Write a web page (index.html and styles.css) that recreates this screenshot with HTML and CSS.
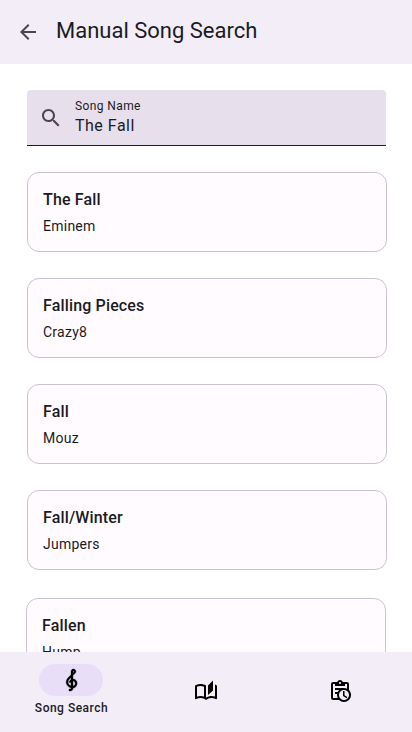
FILE: index.html
```html
<!DOCTYPE html>
<html lang="en">
<head>
<meta charset="utf-8">
<title>Manual Song Search</title>
<link rel="stylesheet" href="styles.css">
</head>
<body>
<div class="screen">
  <header class="app-bar">
    <svg class="icon back" viewBox="0 0 24 24"><path d="M20 11H7.83l5.59-5.59L12 4l-8 8 8 8 1.41-1.41L7.83 13H20v-2z"/></svg>
    <h1>Manual Song Search</h1>
  </header>
  <main>
    <label class="field">
      <svg class="icon" viewBox="0 0 24 24"><path d="M15.5 14h-.79l-.28-.27C15.41 12.59 16 11.11 16 9.5 16 5.91 13.09 3 9.5 3S3 5.91 3 9.5 5.91 16 9.5 16c1.61 0 3.09-.59 4.23-1.57l.27.28v.79l5 4.99L20.49 19l-4.99-5zm-6 0C7.01 14 5 11.99 5 9.5S7.01 5 9.5 5 14 7.01 14 9.5 11.99 14 9.5 14z"/></svg>
      <span class="field-text"><span class="field-label">Song Name</span><span class="field-value">The Fall</span></span>
    </label>
    <article class="card"><h2>The Fall</h2><p>Eminem</p></article>
    <article class="card"><h2>Falling Pieces</h2><p>Crazy8</p></article>
    <article class="card"><h2>Fall</h2><p>Mouz</p></article>
    <article class="card"><h2>Fall/Winter</h2><p>Jumpers</p></article>
    <article class="card card-last"><h2>Fallen</h2><p>Hump</p></article>
  </main>
  <nav class="nav-bar">
    <a class="nav-item active">
      <span class="pill"><svg class="icon clef" viewBox="0 0 24 24"><path d="M13 11V7.5L15.2 5.29C16 4.5 16.15 3.24 15.59 2.26C15.14 1.47 14.32 1 13.45 1C13.24 1 13 1.03 12.81 1.09C11.73 1.38 11 2.38 11 3.5V6.74L7.86 9.91C6.2 11.6 5.7 14.13 6.61 16.34C7.38 18.24 9.06 19.55 11 19.89V20.5C11 20.76 10.77 21 10.5 21H9V23H10.5C11.85 23 13 21.89 13 20.5V20C15.03 20 17.16 18.08 17.16 15.25C17.16 12.95 15.24 11 13 11M13 3.5C13 3.27 13.11 3.09 13.32 3.03C13.54 2.97 13.77 3.06 13.88 3.26C14 3.46 13.96 3.71 13.8 3.87L13 4.73V3.5M11 11.5C10.03 12.14 9.3 13.24 9.04 14.26L11 14.78V17.83C9.87 17.53 8.9 16.71 8.43 15.57C7.84 14.11 8.16 12.45 9.26 11.33L11 9.5V11.5M13 18V12.94C14.17 12.94 15.18 14.04 15.18 15.25C15.18 17 13.91 18 13 18Z"/></svg></span>
      <span class="nav-label">Song Search</span>
    </a>
    <a class="nav-item">
      <svg class="icon book" viewBox="0 0 24 24"><path d="M22.47 5.2C22 4.96 21.51 4.76 21 4.59v12.03C19.86 16.21 18.69 16 17.5 16c-1.9 0-3.78.54-5.5 1.58V5.48C10.38 4.55 8.51 4 6.5 4c-1.79 0-3.48.44-4.97 1.2-.33.16-.53.51-.53.88v12.08c0 .58.47.99 1 .99.16 0 .32-.04.48-.12C3.69 18.4 5.05 18 6.5 18c2.07 0 3.98.82 5.5 2 1.52-1.18 3.43-2 5.5-2 1.45 0 2.81.4 4.02 1.04.16.08.32.12.48.12.52 0 1-.41 1-.99V6.08c0-.37-.2-.72-.53-.88zM10 16.62C8.86 16.21 7.69 16 6.5 16s-2.36.21-3.5.62V6.71C4.11 6.24 5.28 6 6.5 6c1.2 0 2.39.25 3.5.72v9.9zM19 .5l-5 5V15l5-4.5V.5z"/></svg>
    </a>
    <a class="nav-item">
      <svg class="icon" viewBox="0 0 24 24"><path d="M21 11.11V5a2 2 0 0 0-2-2h-4.18C14.4 1.84 13.3 1 12 1S9.6 1.84 9.18 3H5a2 2 0 0 0-2 2v14a2 2 0 0 0 2 2h6.11c1.26 1.24 2.98 2 4.89 2 3.87 0 7-3.13 7-7 0-1.91-.76-3.63-2-4.89M12 3c.55 0 1 .45 1 1s-.45 1-1 1-1-.45-1-1 .45-1 1-1M5 19V5h2v2h10V5h2v4.68c-.91-.43-1.92-.68-3-.68H7v2h4.1c-.6.57-1.06 1.25-1.42 2H7v2h2.08c-.05.33-.08.66-.08 1 0 1.08.25 2.09.68 3H5m11 2c-2.76 0-5-2.24-5-5s2.24-5 5-5 5 2.24 5 5-2.24 5-5 5m.5-4.75 2.86 1.69-.75 1.22L15 17v-5h1.5v4.25Z"/></svg>
    </a>
  </nav>
</div>
</body>
</html>
```
FILE: styles.css
```css
* { box-sizing: border-box; margin: 0; }
body { font-family: Roboto, sans-serif; color: #1c1b1f; background: #fff; }
.screen { height: 732px; display: flex; flex-direction: column; overflow: hidden; }
.icon { width: 24px; height: 24px; flex: none; display: block; }
.app-bar {
  height: 64px; flex: none; display: flex; align-items: center; gap: 16px;
  padding: 0 16px 2px; background: #f2edf7;
}
.back { fill: #49454f; margin-top: 2px; }
h1 { font-size: 22px; line-height: 28px; font-weight: 400; }
main {
  flex: 1; min-height: 0; overflow: hidden; padding: 26px 25px 0 27px;
  display: flex; flex-direction: column; gap: 26px;
}
.field {
  height: 56px; flex: none; margin-right: 1px; padding: 0 12px; display: flex; align-items: center; gap: 12px;
  background: #e7e0ec; border-bottom: 1px solid #1c1b1f; border-radius: 4px 4px 0 0; fill: #49454f;
}
.field-text { display: flex; flex-direction: column; }
.field-label { font-size: 12px; line-height: 16px; letter-spacing: .4px; }
.field-value { font-size: 16px; line-height: 24px; letter-spacing: .5px; }
.card {
  height: 80px; flex: none; padding: 15px; background: #fffbff;
  border: 1px solid #cac4d0; border-radius: 12px;
}
.card h2 { font-size: 16px; line-height: 24px; font-weight: 500; letter-spacing: .15px; }
.card p { margin-top: 4px; font-size: 14px; line-height: 20px; letter-spacing: .25px; }
.card-last { margin: 2px 1px 0 -1px; }
.nav-bar {
  height: 80px; flex: none; padding: 12px 4px 16px; background: #f2edf7; fill: #000;
  display: grid; grid-template-columns: 134px 136px 132px;
}
.nav-item { display: flex; flex-direction: column; align-items: center; padding-top: 15px; }
.nav-item.active { padding-top: 0; gap: 4px; }
.pill { width: 64px; height: 32px; border-radius: 16px; background: #e8def8; display: flex; align-items: center; justify-content: center; }
.clef { margin-left: 1px; stroke: #000; stroke-width: .35px; }
.book { margin-top: 1px; }
.nav-label { margin-left: 1px; font-size: 12px; line-height: 16px; font-weight: 500; letter-spacing: .5px; }
```
